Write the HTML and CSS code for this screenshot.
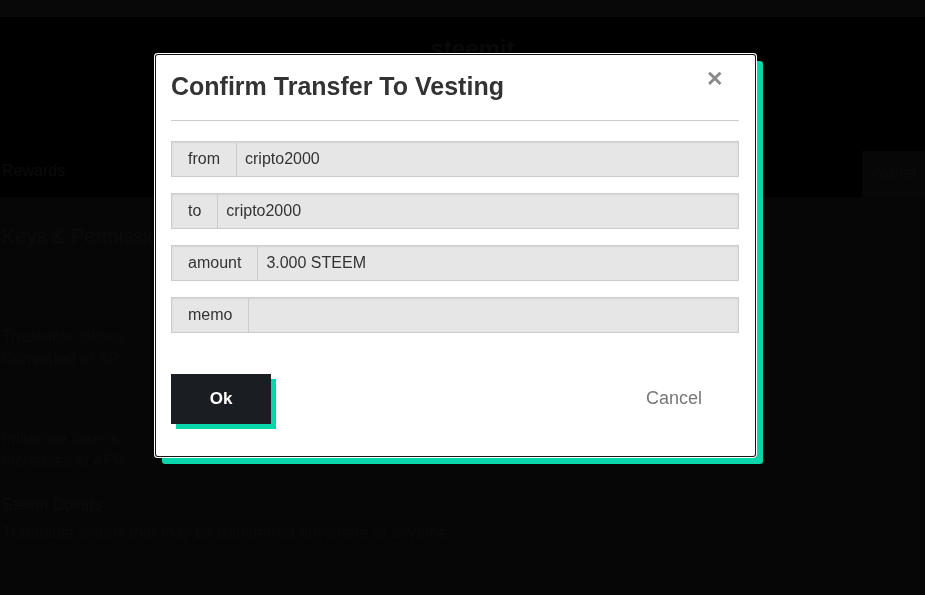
FILE: index.html
```html
<!DOCTYPE html>
<html lang="en">
<head>
<meta charset="UTF-8">
<title>Confirm Transfer To Vesting</title>
<link rel="stylesheet" href="styles.css">
</head>
<body>
	<div class="page">
		<div class="topbar"></div>
		<div class="banner">
			<div class="logo">steemit</div>
			<div class="tabs">
				<span class="tab">Rewards</span>
				<span class="tab wallet">Wallet</span>
			</div>
		</div>
		<div class="content">
			<h3 class="faint-title">Keys &amp; Permissions</h3>
			<p class="faint">Tradeable tokens</p>
			<p class="faint">Converted to SP</p>
			<p class="faint gap">Influence tokens</p>
			<p class="faint">Increases at APR</p>
			<h3 class="faint-title small">Steem Dollars</h3>
			<p class="faint">Tradeable tokens that may be transferred anywhere at anytime</p>
		</div>
	</div>

	<div class="overlay">
		<div class="modal">
			<div class="modal-head">
				<h2>Confirm Transfer To Vesting</h2>
				<span class="close">&#10005;</span>
			</div>
			<div class="fields">
				<div class="group"><span class="label">from</span><span class="value">cripto2000</span></div>
				<div class="group"><span class="label">to</span><span class="value">cripto2000</span></div>
				<div class="group"><span class="label">amount</span><span class="value">3.000 STEEM</span></div>
				<div class="group"><span class="label">memo</span><span class="value"></span></div>
			</div>
			<div class="actions">
				<a href="javascript:;" class="btn-ok">Ok</a>
				<a href="javascript:;" class="btn-cancel">Cancel</a>
			</div>
		</div>
	</div>
</body>
</html>
```

FILE: styles.css
```css
body{margin:0;background:#060606;font-family:"Liberation Sans",Arial,sans-serif;overflow:hidden;}
h2,h3,p{margin:0;}
a{text-decoration:none;}

.page{height:595px;}
.topbar{height:17px;background:#080808;}
.banner{height:180px;background:#000;display:flex;flex-direction:column;justify-content:space-between;}
.logo{align-self:center;margin:18px 0 0 20px;color:#090909;font-size:24px;font-weight:bold;}
.tabs{display:flex;justify-content:space-between;align-items:flex-end;}
.tab{color:#0b0b0b;font-size:16px;padding:0 0 17px 2px;}
.tab.wallet{background:#070707;width:55px;height:46px;line-height:44px;padding:0 0 0 8px;font-size:17px;}

.content{padding:28px 0 0 2px;}
.faint-title{color:#0b0b0b;font-size:20px;font-weight:normal;margin-bottom:78px;}
.faint-title.small{font-size:16px;margin:24px 0 8px;}
.faint{color:#0a0a0a;font-size:16px;line-height:22px;}
.faint.gap{margin-top:58px;}

.overlay{position:fixed;left:0;top:0;right:0;bottom:0;padding:53px 0 0 154px;}
.modal{width:603px;height:405px;box-sizing:border-box;background:#fff;border-radius:4px;
	box-shadow:inset 0 0 0 1px #fff,inset 0 0 0 2px #141414,7px 7px 0 -1px #06d6a9;padding:0 18px 0 17px;}

.modal-head{display:flex;justify-content:space-between;align-items:flex-start;padding:19px 0 20px;border-bottom:1px solid #ccc;}
.modal-head h2{font-size:25px;color:#333;font-weight:bold;line-height:28px;}
.close{color:#8a8a8a;font-size:21px;font-weight:bold;line-height:24px;margin:-5px 15px 0 0;}

.fields{display:flex;flex-direction:column;gap:16px;padding-top:20px;}
.group{display:flex;height:36px;box-sizing:border-box;border:1px solid #ccc;background:#e6e6e6;
	box-shadow:inset 0 1px 2px rgba(0,0,0,.08);font-size:16px;color:#333;}
.label{display:flex;align-items:center;padding:0 16px;border-right:1px solid #ccc;}
.value{display:flex;align-items:center;padding:0 8px;flex:1;}

.actions{display:flex;justify-content:space-between;align-items:center;padding:41px 0 0;}
.btn-ok{display:block;width:100px;height:50px;line-height:50px;text-align:center;background:#1a1e23;color:#fff;
	font-weight:bold;font-size:17px;box-shadow:5px 5px 0 #06d6a9;}
.btn-cancel{color:#777;font-size:18px;margin:0 37px 2px 0;}
```
